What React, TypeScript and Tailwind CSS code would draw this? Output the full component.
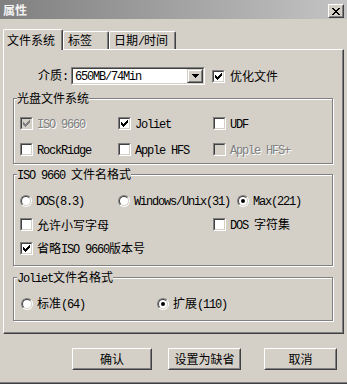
import React from 'react';

const Txt = ({ s }: { s: string }) => {
  const parts = s.split(/([\x20-\x7e]+)/).filter(Boolean);
  return (
    <>
      {parts.map((p, i) =>
        /^[\x20-\x7e]/.test(p) ? (
          <span key={i} className="font-['Liberation_Mono',monospace] tracking-[-1.2px]">
            {p}
          </span>
        ) : (
          <span key={i}>{p}</span>
        )
      )}
    </>
  );
};

const CheckMark = ({ color }: { color: string }) => (
  <svg width="7" height="7" viewBox="0 0 7 7" shapeRendering="crispEdges" fill={color}>
    <rect x="6" y="0" width="1" height="1" />
    <rect x="5" y="1" width="2" height="1" />
    <rect x="0" y="2" width="1" height="1" />
    <rect x="4" y="2" width="3" height="1" />
    <rect x="0" y="3" width="2" height="1" />
    <rect x="3" y="3" width="3" height="1" />
    <rect x="0" y="4" width="5" height="1" />
    <rect x="1" y="5" width="3" height="1" />
    <rect x="2" y="6" width="1" height="1" />
  </svg>
);

const Box = ({ checked, disabled }: { checked?: boolean; disabled?: boolean }) => (
  <div className="w-[13px] h-[13px] shrink-0 border border-t-[#808080] border-l-[#808080] border-b-white border-r-white">
    <div
      className={`w-full h-full flex items-center justify-center border border-t-[#404040] border-l-[#404040] border-b-[#d4d0c8] border-r-[#d4d0c8] ${
        disabled ? 'bg-[#d4d0c8]' : 'bg-white'
      }`}
    >
      {checked && <CheckMark color={disabled ? '#808080' : '#000000'} />}
    </div>
  </div>
);

const Radio = ({ checked }: { checked?: boolean }) => (
  <div className="w-[12px] h-[12px] shrink-0 rounded-full border border-t-[#808080] border-l-[#808080] border-b-white border-r-white">
    <div className="w-full h-full rounded-full flex items-center justify-center bg-white border border-t-[#404040] border-l-[#404040] border-b-[#d4d0c8] border-r-[#d4d0c8]">
      {checked && <div className="w-[4px] h-[4px] rounded-full bg-black" />}
    </div>
  </div>
);

const Check = ({ label, checked, disabled, className = '' }: { label: string; checked?: boolean; disabled?: boolean; className?: string }) => (
  <div className={`flex items-center gap-[4px] h-[13px] ${className}`}>
    <Box checked={checked} disabled={disabled} />
    <span className={`leading-[14px] whitespace-nowrap ${disabled ? 'text-[#808080] [text-shadow:1px_1px_0_#fff]' : ''}`}>
      <Txt s={label} />
    </span>
  </div>
);

const Option = ({ label, checked, className = '' }: { label: string; checked?: boolean; className?: string }) => (
  <div className={`flex items-center gap-[4px] h-[13px] ${className}`}>
    <Radio checked={checked} />
    <span className="leading-[14px] whitespace-nowrap">
      <Txt s={label} />
    </span>
  </div>
);

const Group = ({ title, className, children }: { title: string; className: string; children: React.ReactNode }) => (
  <div className={`relative ml-[9px] w-[320px] border border-[#808080] shadow-[inset_1px_1px_0_#fff,1px_1px_0_#fff] ${className}`}>
    <span className="absolute -top-[8px] left-[3px] bg-[#d4d0c8] leading-[14px] whitespace-nowrap">
      <Txt s={title} />
    </span>
    {children}
  </div>
);

const Btn = ({ label, className }: { label: string; className: string }) => (
  <div className={`h-[22px] border border-t-white border-l-white border-b-[#404040] border-r-[#404040] ${className}`}>
    <div className="h-full flex items-center justify-center border border-transparent border-b-[#808080] border-r-[#808080] leading-[14px]">
      {label}
    </div>
  </div>
);

export default function App() {
  return (
    <div className="w-[347px] h-[384px] bg-[#d4d0c8] flex flex-col overflow-hidden text-[12px] text-black font-['Noto_Sans_CJK_SC',sans-serif]">
      {/* title bar */}
      <div className="h-[19px] shrink-0 flex items-start justify-between pl-[3px] pr-[3px] bg-linear-to-r from-[#808080] to-[#c4c4c4]">
        <span className="mt-[3px] font-bold leading-[14px] text-[#f2f2f2]">属性</span>
        <div className="mt-[4px] w-[16px] h-[14px] border border-t-white border-l-white border-b-[#404040] border-r-[#404040]">
          <div className="w-full h-full flex items-center justify-center bg-[#d4d0c8] border border-transparent border-b-[#808080] border-r-[#808080]">
            <svg width="8" height="7" viewBox="0 0 8 7" shapeRendering="crispEdges" fill="#000">
              <rect x="0" y="0" width="2" height="1" />
              <rect x="6" y="0" width="2" height="1" />
              <rect x="1" y="1" width="2" height="1" />
              <rect x="5" y="1" width="2" height="1" />
              <rect x="2" y="2" width="4" height="1" />
              <rect x="3" y="3" width="2" height="1" />
              <rect x="2" y="4" width="4" height="1" />
              <rect x="1" y="5" width="2" height="1" />
              <rect x="5" y="5" width="2" height="1" />
              <rect x="0" y="6" width="2" height="1" />
              <rect x="6" y="6" width="2" height="1" />
            </svg>
          </div>
        </div>
      </div>

      {/* tabs */}
      <div className="relative z-10 mt-[10px] ml-[3px] h-[20px] flex items-end">
        <div className="w-[60px] h-[21px] -mb-px bg-[#d4d0c8] border-l border-t border-white border-r border-r-[#404040] rounded-t-[2px] shadow-[inset_-1px_0_0_#808080] pl-[3px] pt-[3px] leading-[14px]">
          文件系统
        </div>
        <div className="w-[46px] h-[18px] border-l border-t border-white border-r border-r-[#404040] rounded-t-[2px] shadow-[inset_-1px_0_0_#808080] pl-[4px] pt-[1px] leading-[14px]">
          标签
        </div>
        <div className="w-[67px] h-[18px] border-l border-t border-white border-r border-r-[#404040] rounded-t-[2px] shadow-[inset_-1px_0_0_#808080] pl-[4px] pt-[1px] leading-[14px]">
          <Txt s="日期/时间" />
        </div>
      </div>

      {/* panel */}
      <div className="ml-[3px] w-[341px] h-[285px] shrink-0 border border-t-white border-l-white border-r-[#404040] border-b-[#404040] shadow-[inset_-1px_-1px_0_#808080]">
        <div className="mt-[17px] ml-[34px] h-[18px] flex items-center">
          <span className="leading-[14px]">
            <Txt s="介质:" />
          </span>
          <div className="ml-[3px] w-[134px] h-[18px] border border-t-[#808080] border-l-[#808080] border-b-white border-r-white">
            <div className="w-full h-full flex items-center bg-white border border-t-[#404040] border-l-[#404040] border-b-[#d4d0c8] border-r-[#d4d0c8]">
              <span className="pl-[2px] leading-[14px]">
                <Txt s="650MB/74Min" />
              </span>
              <div className="ml-auto w-[16px] h-full border border-t-[#d4d0c8] border-l-[#d4d0c8] border-b-[#404040] border-r-[#404040]">
                <div className="w-full h-full flex items-center justify-center bg-[#d4d0c8] border border-t-white border-l-white border-b-[#808080] border-r-[#808080]">
                  <svg width="7" height="4" viewBox="0 0 7 4" shapeRendering="crispEdges" fill="#000">
                    <rect x="0" y="0" width="7" height="1" />
                    <rect x="1" y="1" width="5" height="1" />
                    <rect x="2" y="2" width="3" height="1" />
                    <rect x="3" y="3" width="1" height="1" />
                  </svg>
                </div>
              </div>
            </div>
          </div>
          <Check label="优化文件" checked className="ml-[7px] gap-[5px]" />
        </div>

        <Group title="光盘文件系统" className="mt-[13px] h-[66px] pt-[18px] pl-[6px]">
          <div className="flex">
            <Check label="ISO 9660" checked disabled className="w-[98px]" />
            <Check label="Joliet" checked className="w-[95px]" />
            <Check label="UDF" />
          </div>
          <div className="flex mt-[13px]">
            <Check label="RockRidge" className="w-[98px]" />
            <Check label="Apple HFS" className="w-[95px]" />
            <Check label="Apple HFS+" disabled />
          </div>
        </Group>

        <Group title="ISO 9660 文件名格式" className="mt-[10px] h-[92px] pt-[19px] pl-[6px]">
          <div className="flex">
            <Option label="DOS(8.3)" className="w-[98px] gap-[3px]" />
            <Option label="Windows/Unix(31)" className="w-[119px] gap-[3px]" />
            <Option label="Max(221)" checked className="gap-[3px]" />
          </div>
          <div className="flex mt-[11px]">
            <Check label="允许小写字母" className="w-[193px]" />
            <Check label="DOS 字符集" />
          </div>
          <div className="flex mt-[11px]">
            <Check label="省略ISO 9660版本号" checked />
          </div>
        </Group>

        <Group title="Joliet文件名格式" className="mt-[11px] h-[44px] pt-[19px] pl-[7px]">
          <div className="flex">
            <Option label="标准(64)" className="w-[136px]" />
            <Option label="扩展(110)" checked />
          </div>
        </Group>
      </div>

      {/* buttons */}
      <div className="mt-[14px] pl-[72px] flex">
        <Btn label="确认" className="w-[80px]" />
        <Btn label="设置为缺省" className="ml-[16px] w-[73px]" />
        <Btn label="取消" className="ml-[23px] w-[73px]" />
      </div>

      <div className="mt-auto h-[2px] shrink-0 bg-[#808080] border-b border-[#404040]" />
    </div>
  );
}
